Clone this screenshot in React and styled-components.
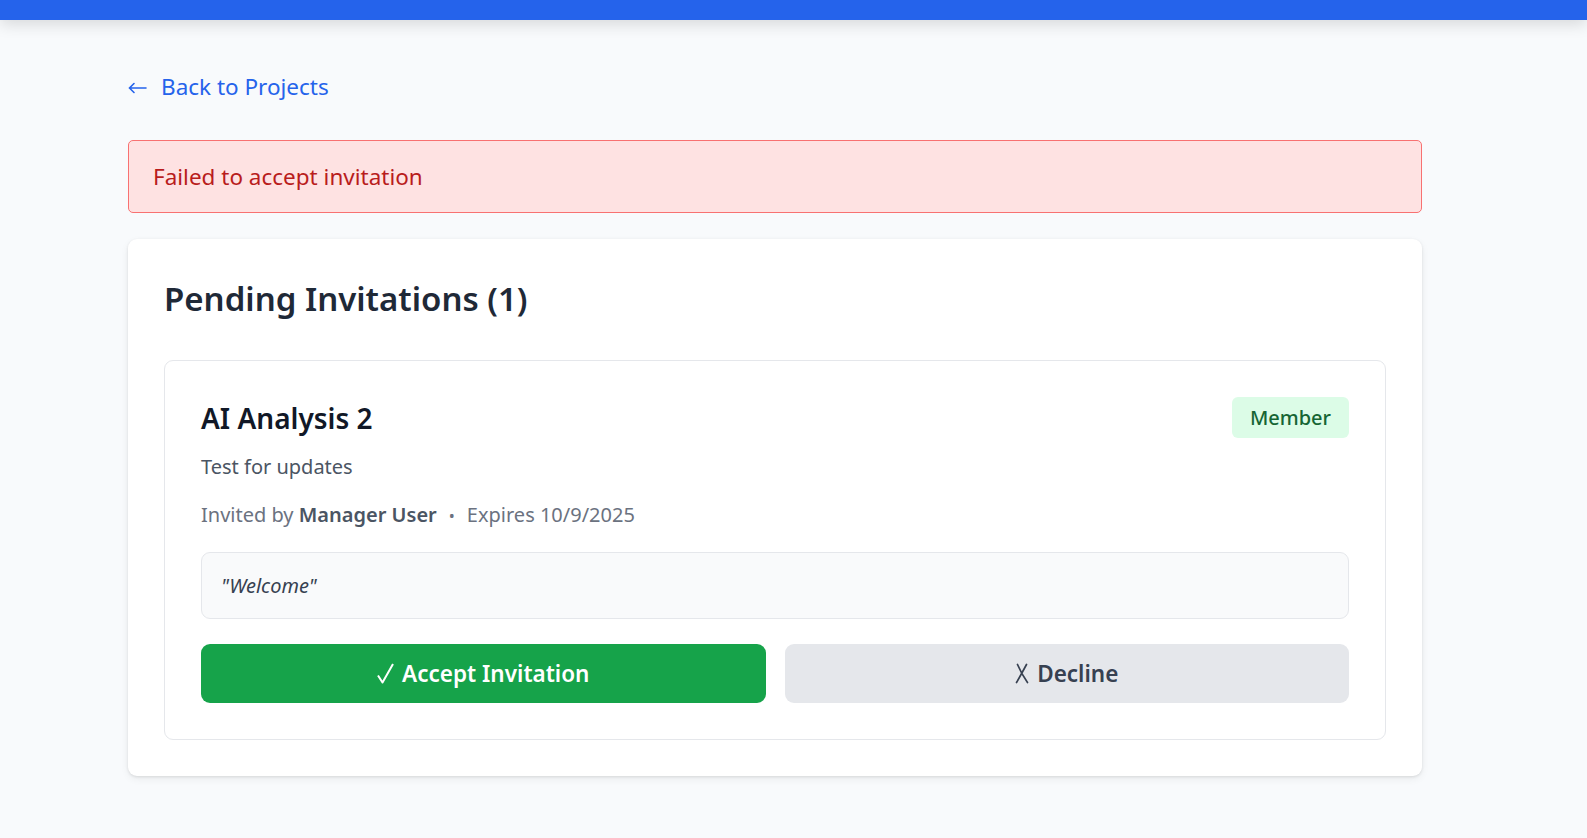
import React from "react";
import styled, { createGlobalStyle } from "styled-components";

const GlobalStyle = createGlobalStyle`
  * { box-sizing: border-box; }
  html, body {
    margin: 0;
    padding: 0;
    background: #f8fafc;
    font-family: "Noto Sans", "Open Sans", sans-serif;
    color: #1f2937;
  }
`;

const invitation = {
  project: "AI Analysis 2",
  description: "Test for updates",
  role: "Member",
  invitedBy: "Manager User",
  expires: "10/9/2025",
  message: "Welcome",
};

const ArrowLeft = () => (
  <svg width="19" height="12" viewBox="0 0 19 12" fill="none" stroke="currentColor" strokeWidth="1.6" strokeLinecap="round">
    <path d="M18 6H2M6 1.5L1.5 6L6 10.5" />
  </svg>
);

const Check = () => (
  <svg width="17" height="21" viewBox="0 0 17 21" fill="none" stroke="currentColor" strokeWidth="2" strokeLinejoin="round">
    <path d="M1 12.5L5.5 19.5L16 1" />
  </svg>
);

const Cross = () => (
  <svg width="14" height="21" viewBox="0 0 14 21" fill="none" stroke="currentColor" strokeWidth="1.7" strokeLinecap="round">
    <path d="M2.5 1.5Q6 10 12.5 19.5M11.5 1.5Q7 10 1.5 19.5" />
  </svg>
);

function App() {
  return (
    <>
      <GlobalStyle />
      <TopBar />
      <Main>
        <BackLink href="#">
          <ArrowLeft />
          <span>Back to Projects</span>
        </BackLink>

        <ErrorBox>Failed to accept invitation</ErrorBox>

        <Panel>
          <PanelTitle>Pending Invitations (1)</PanelTitle>

          <InviteCard>
            <InviteHead>
              <div>
                <ProjectName>{invitation.project}</ProjectName>
                <Description>{invitation.description}</Description>
              </div>
              <RoleBadge>{invitation.role}</RoleBadge>
            </InviteHead>

            <Meta>
              Invited by <strong>{invitation.invitedBy}</strong>
              <Dot>•</Dot>
              Expires {invitation.expires}
            </Meta>

            <Quote>"{invitation.message}"</Quote>

            <Actions>
              <ActionBtn data-variant="accept">
                <Check />
                <span>Accept Invitation</span>
              </ActionBtn>
              <ActionBtn data-variant="decline">
                <Cross />
                <span>Decline</span>
              </ActionBtn>
            </Actions>
          </InviteCard>
        </Panel>
      </Main>
    </>
  );
}

const TopBar = styled.div`
  height: 20px;
  background: #2563eb;
  box-shadow: 0 4px 16px rgba(0, 0, 0, 0.14);
`;

const Main = styled.main`
  width: 1294px;
  margin-left: 128px;
  padding-top: 52px;
  padding-bottom: 60px;
`;

const BackLink = styled.a`
  display: inline-flex;
  align-items: center;
  gap: 14px;
  color: #2563eb;
  text-decoration: none;
  font-size: 22.5px;
  line-height: 30px;

  svg {
    margin-top: 2px;
  }
`;

const ErrorBox = styled.div`
  margin-top: 38px;
  height: 73px;
  display: flex;
  align-items: center;
  padding: 0 24px;
  background: #fee2e2;
  border: 1px solid #f87171;
  border-radius: 5px;
  color: #b91c1c;
  font-size: 22.5px;
`;

const Panel = styled.section`
  margin-top: 26px;
  padding: 36px;
  background: #fff;
  border-radius: 9px;
  box-shadow: 0 1px 3px rgba(0, 0, 0, 0.1), 0 3px 8px rgba(0, 0, 0, 0.06);
`;

const PanelTitle = styled.h2`
  margin: 0 0 37px;
  font-size: 33px;
  line-height: 48px;
  font-weight: 600;
  color: #1f2937;
`;

const InviteCard = styled.div`
  padding: 38px 36px 36px;
  border: 1px solid #e5e7eb;
  border-radius: 9px;
`;

const InviteHead = styled.div`
  display: flex;
  justify-content: space-between;
  align-items: flex-start;
`;

const ProjectName = styled.h3`
  margin: 0;
  font-size: 28px;
  line-height: 38px;
  font-weight: 600;
  color: #111827;
`;

const Description = styled.p`
  margin: 16px 0 0;
  font-size: 20px;
  line-height: 28px;
  color: #4b5563;
`;

const RoleBadge = styled.span`
  margin-top: -2px;
  padding: 0 18px;
  height: 41px;
  display: inline-flex;
  align-items: center;
  background: #dcfce7;
  color: #166534;
  border-radius: 6px;
  font-size: 20px;
  font-weight: 500;
`;

const Meta = styled.div`
  margin-top: 20px;
  font-size: 20px;
  line-height: 28px;
  color: #6b7280;

  strong {
    color: #4b5563;
    font-weight: 600;
  }
`;

const Dot = styled.span`
  margin: 0 12px;
  font-size: 16px;
`;

const Quote = styled.div`
  margin-top: 22px;
  height: 67px;
  display: flex;
  align-items: center;
  padding: 0 19px;
  background: #f9fafb;
  border: 1px solid #e5e7eb;
  border-radius: 9px;
  font-size: 20px;
  font-style: italic;
  color: #374151;
`;

const Actions = styled.div`
  margin-top: 25px;
  display: grid;
  grid-template-columns: 1fr 1fr;
  gap: 19px;
`;

const ActionBtn = styled.button`
  height: 59px;
  display: inline-flex;
  align-items: center;
  justify-content: center;
  gap: 8px;
  border: none;
  border-radius: 9px;
  font-family: inherit;
  font-size: 22.5px;
  font-weight: 600;
  cursor: pointer;

  &[data-variant="accept"] {
    background: #16a34a;
    color: #fff;
  }
  &[data-variant="decline"] {
    background: #e5e7eb;
    color: #374151;
  }
`;

export default App;
